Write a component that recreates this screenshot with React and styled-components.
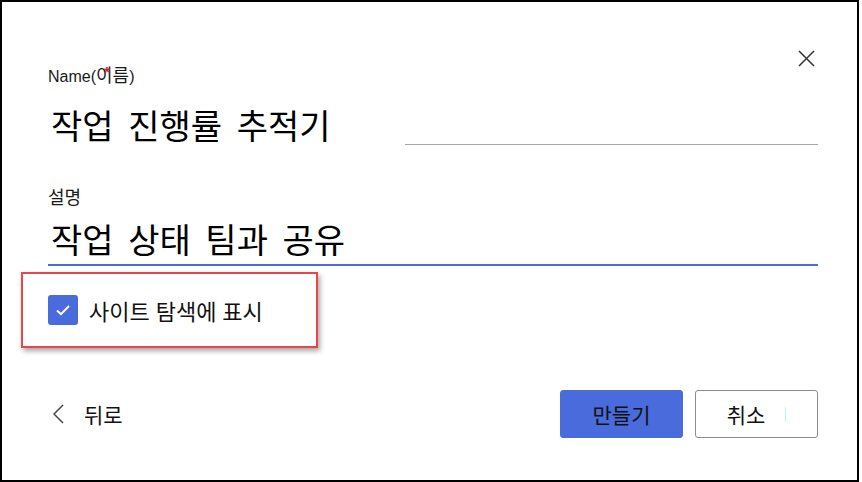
import styled, { createGlobalStyle } from 'styled-components'

const GlobalStyle = createGlobalStyle`
  html, body {
    margin: 0;
    padding: 0;
    background: #ffffff;
  }
  body {
    font-family: "Noto Sans CJK KR", "Liberation Sans", sans-serif;
    color: #111;
  }
`

const BLUE = '#4a6bdb'

const Dialog = styled.div`
  box-sizing: border-box;
  width: 859px;
  height: 482px;
  border: 2px solid #000;
  background: #fff;
  padding: 44px 39px 0 46px;
  display: flex;
  flex-direction: column;
`

const HeaderRow = styled.div`
  display: flex;
  justify-content: space-between;
  align-items: flex-start;
`

const Label = styled.label`
  position: relative;
  display: block;
  margin-top: ${(p) => p.$top || 0}px;
  font-family: "Liberation Sans", "Noto Sans CJK KR", sans-serif;
  font-size: ${(p) => p.$size || 16}px;
  line-height: 22px;
  color: #1a1a1a;
`

const Hangul = styled.span`
  font-family: "Noto Sans CJK KR", sans-serif;
  font-size: 18px;
`

const Required = styled.span`
  position: absolute;
  left: 56px;
  top: -2px;
  color: #c0262d;
  font-size: 15px;
  font-weight: bold;
`

const CloseButton = styled.button`
  width: 24px;
  height: 24px;
  padding: 0;
  border: none;
  background: transparent;
  display: flex;
  align-items: center;
  justify-content: center;
`

const FieldRow = styled.div`
  display: flex;
  justify-content: space-between;
  align-items: flex-end;
  margin-top: ${(p) => p.$top || 0}px;
  padding-bottom: ${(p) => (p.$active ? 5 : 0)}px;
  border-bottom: ${(p) => (p.$active ? `2px solid ${BLUE}` : 'none')};
`

const Value = styled.div`
  font-size: 34px;
  line-height: 40px;
  word-spacing: 7px;
  color: #000;
  padding-left: 3px;
`

const Rule = styled.div`
  width: 413px;
  border-bottom: 1px solid #a6a6a6;
`

const Highlight = styled.div`
  box-sizing: border-box;
  width: 297px;
  height: 76px;
  margin: 6px 0 0 -27px;
  padding-left: 25px;
  border: 2px solid #e8464a;
  box-shadow: 2px 3px 5px rgba(0, 0, 0, 0.35);
  display: flex;
  align-items: center;
  gap: 11px;
`

const CheckBox = styled.span`
  width: 30px;
  height: 30px;
  border-radius: 3px;
  background: ${BLUE};
  display: flex;
  align-items: center;
  justify-content: center;
`

const CheckText = styled.span`
  font-size: 22px;
  line-height: 26px;
  word-spacing: 1px;
  color: #111;
`

const Footer = styled.div`
  margin-top: 42px;
  display: flex;
  justify-content: space-between;
  align-items: center;
`

const BackLink = styled.a`
  display: flex;
  align-items: center;
  gap: 20px;
  padding-left: 5px;
  font-size: 21px;
  color: #111;
  text-decoration: none;
`

const Actions = styled.div`
  display: flex;
  gap: 12px;
`

const Button = styled.button`
  box-sizing: border-box;
  width: 123px;
  height: 48px;
  border-radius: 3px;
  font-family: "Noto Sans CJK KR", sans-serif;
  font-size: 21px;
  color: #111;
  display: flex;
  align-items: center;
  justify-content: center;
  background: ${(p) => (p.$primary ? BLUE : '#fff')};
  border: 1px solid ${(p) => (p.$primary ? BLUE : '#8c8c8c')};
`

const Caret = styled.span`
  width: 1px;
  height: 15px;
  margin-left: 20px;
  background: #bdf2ff;
`

export default function App() {
  return (
    <>
      <GlobalStyle />
      <Dialog>
        <HeaderRow>
          <Label $top={17}>
            Name(<Hangul>이름</Hangul>)
            <Required>*</Required>
          </Label>
          <CloseButton aria-label="닫기">
            <svg width="17" height="17" viewBox="0 0 17 17">
              <path d="M1 1L16 16M16 1L1 16" stroke="#333" strokeWidth="1.5" fill="none" />
            </svg>
          </CloseButton>
        </HeaderRow>

        <FieldRow $top={17}>
          <Value>작업 진행률 추적기</Value>
          <Rule />
        </FieldRow>

        <Label $top={42} $size={18}>설명</Label>
        <FieldRow $top={10} $active>
          <Value>작업 상태 팀과 공유</Value>
        </FieldRow>

        <Highlight>
          <CheckBox>
            <svg width="18" height="18" viewBox="0 0 18 18">
              <path d="M3 9.5L7 13.2L15 5" stroke="#fff" strokeWidth="2" fill="none" />
            </svg>
          </CheckBox>
          <CheckText>사이트 탐색에 표시</CheckText>
        </Highlight>

        <Footer>
          <BackLink href="#">
            <svg width="11" height="20" viewBox="0 0 11 20">
              <path d="M10 1L1 10L10 19" stroke="#444" strokeWidth="1.5" fill="none" />
            </svg>
            뒤로
          </BackLink>
          <Actions>
            <Button $primary>만들기</Button>
            <Button>
              취소
              <Caret />
            </Button>
          </Actions>
        </Footer>
      </Dialog>
    </>
  )
}
